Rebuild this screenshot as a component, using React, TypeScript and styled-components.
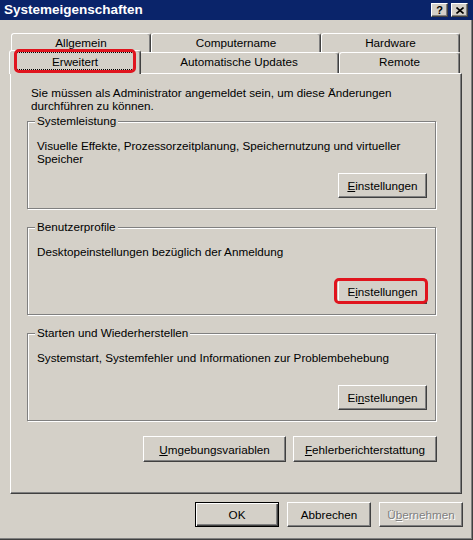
import styled, { createGlobalStyle, css } from "styled-components";

const GlobalStyle = createGlobalStyle`
  html, body {
    margin: 0;
    padding: 0;
    background: #d4d0c8;
  }
  body {
    font-family: "Liberation Sans", Arial, sans-serif;
    font-size: 11.7px;
    color: #000;
  }
`;

const raised = css`
  border: 1px solid;
  border-color: #fff #404040 #404040 #fff;
  box-shadow: inset -1px -1px #808080;
`;

const Window = styled.div`
  width: 473px;
  height: 540px;
  display: flex;
  flex-direction: column;
  background: #d4d0c8;
  overflow: hidden;
`;

const TitleBar = styled.div`
  flex: none;
  height: 20px;
  background: #0a246a;
  display: flex;
  align-items: center;
  padding: 0 5px 0 4px;
`;

const Title = styled.div`
  flex: 1;
  color: #fff;
  font-weight: bold;
  font-size: 13.5px;
  line-height: 20px;
`;

const CaptionButton = styled.div<{ $gap?: number }>`
  ${raised};
  box-sizing: border-box;
  width: 17px;
  height: 14px;
  margin-left: ${(p) => p.$gap ?? 0}px;
  background: #d4d0c8;
  display: flex;
  align-items: center;
  justify-content: center;
  font-weight: bold;
  font-size: 11px;
  line-height: 1;
`;

const Body = styled.div`
  flex: 1;
  box-sizing: border-box;
  padding: 13px 10px 0 10px;
  border-right: 1px solid #404040;
  border-bottom: 1px solid #404040;
  box-shadow: inset -1px -1px #808080;
  display: flex;
  flex-direction: column;
`;

const TabStrip = styled.div`
  display: flex;
  flex-direction: column;
  padding-left: 1px;
`;

const TabRow = styled.div<{ $h: number }>`
  display: flex;
  height: ${(p) => p.$h}px;
`;

const Tab = styled.div<{ $w: number; $active?: boolean }>`
  box-sizing: border-box;
  flex: none;
  width: ${(p) => p.$w}px;
  border: 1px solid;
  border-bottom: none;
  border-color: #fff #404040 transparent #fff;
  border-radius: 3px 3px 0 0;
  box-shadow: inset -1px 0 #808080;
  background: #d4d0c8;
  text-align: center;
  line-height: 18px;
  white-space: nowrap;

  ${(p) =>
    p.$active &&
    css`
      position: relative;
      z-index: 1;
      width: ${p.$w + 4}px;
      margin: -2px -2px -1px -2px;

      &::after {
        content: "";
        position: absolute;
        left: 4px;
        right: 4px;
        top: -2px;
        bottom: 1px;
        border: 3px solid #e0141e;
        border-radius: 5px;
        pointer-events: none;
      }
    `}
`;

const FocusRing = styled.span`
  display: block;
  margin: 1px 6px 0;
  padding-top: 1px;
  border: 1px dotted #000;
  line-height: 15px;
`;

const Panel = styled.div`
  ${raised};
  flex: none;
  box-sizing: border-box;
  height: 421px;
  padding: 12px 25px 0 16px;
  display: flex;
  flex-direction: column;
`;

const Intro = styled.div`
  margin: 0 0 2px 4px;
  line-height: 13px;
`;

const GroupBox = styled.fieldset`
  margin: 0;
  padding: 11px 8px 10px 9px;
  min-inline-size: 0;
  border: 1px solid #808080;
  box-shadow: inset 1px 1px #fff, 1px 1px #fff;

  & + & {
    margin-top: 11px;
  }
`;

const GroupLabel = styled.legend`
  padding: 0 2px;
  margin-left: -2px;
  line-height: 14px;
  background: #d4d0c8;
`;

const GroupBody = styled.div`
  height: 59px;
  display: flex;
  flex-direction: column;
`;

const GroupText = styled.div`
  line-height: 13px;
`;

const Button = styled.button<{
  $w: number;
  $h?: number;
  $default?: boolean;
  $marked?: boolean;
}>`
  ${raised};
  position: relative;
  box-sizing: border-box;
  width: ${(p) => p.$w}px;
  height: ${(p) => p.$h ?? 25}px;
  margin: 0;
  padding: 0;
  font: inherit;
  color: #000;
  background: #d4d0c8;
  box-shadow: inset -1px -1px #808080, inset 1px 1px #d4d0c8;
  white-space: nowrap;

  ${(p) =>
    p.$default &&
    css`
      border: 1px solid #000;
      box-shadow: inset 1px 1px #fff, inset -1px -1px #404040,
        inset -2px -2px #808080;
    `}

  &:disabled {
    color: #808080;
    text-shadow: 1px 1px #fff;
  }

  ${(p) =>
    p.$marked &&
    css`
      &::after {
        content: "";
        position: absolute;
        left: -5px;
        right: -2px;
        top: -2px;
        bottom: -1px;
        border: 3px solid #e0141e;
        border-radius: 5px;
        pointer-events: none;
      }
    `}
`;

const GroupButton = styled(Button)`
  align-self: flex-end;
  margin-top: auto;
`;

const ActionRow = styled.div`
  display: flex;
  justify-content: flex-end;
  gap: 7px;
  margin: 15px -1px 0 0;
`;

const Footer = styled.div`
  display: flex;
  justify-content: flex-end;
  gap: 8px;
  margin: 8px -1px 0 0;
`;

const CloseGlyph = () => (
  <svg width="8" height="7" viewBox="0 0 8 7">
    <path d="M0.5 0.5 L7.5 6.5 M7.5 0.5 L0.5 6.5" stroke="#000" strokeWidth="1.6" />
  </svg>
);

const groups = [
  {
    title: "Systemleistung",
    text: "Visuelle Effekte, Prozessorzeitplanung, Speichernutzung und virtueller Speicher",
    key: 0,
  },
  {
    title: "Benutzerprofile",
    text: "Desktopeinstellungen bezüglich der Anmeldung",
    key: 1,
    marked: true,
  },
  {
    title: "Starten und Wiederherstellen",
    text: "Systemstart, Systemfehler und Informationen zur Problembehebung",
    key: 2,
  },
];

const Mnemonic = ({ label, at }: { label: string; at: number }) => (
  <>
    {label.slice(0, at)}
    <u>{label[at]}</u>
    {label.slice(at + 1)}
  </>
);

export default function App() {
  return (
    <>
      <GlobalStyle />
      <Window>
        <TitleBar>
          <Title>Systemeigenschaften</Title>
          <CaptionButton>?</CaptionButton>
          <CaptionButton $gap={3}>
            <CloseGlyph />
          </CaptionButton>
        </TitleBar>
        <Body>
          <TabStrip>
            <TabRow $h={19}>
              <Tab $w={140}>Allgemein</Tab>
              <Tab $w={170}>Computername</Tab>
              <Tab $w={139}>Hardware</Tab>
            </TabRow>
            <TabRow $h={21}>
              <Tab $w={128} $active>
                <FocusRing>Erweitert</FocusRing>
              </Tab>
              <Tab $w={200}>Automatische Updates</Tab>
              <Tab $w={121}>Remote</Tab>
            </TabRow>
          </TabStrip>

          <Panel>
            <Intro>
              Sie müssen als Administrator angemeldet sein, um diese Änderungen
              <br />
              durchführen zu können.
            </Intro>

            {groups.map((g) => (
              <GroupBox key={g.key}>
                <GroupLabel>{g.title}</GroupLabel>
                <GroupBody>
                  <GroupText>{g.text}</GroupText>
                  <GroupButton $w={89} $marked={g.marked}>
                    <Mnemonic label="Einstellungen" at={g.key} />
                  </GroupButton>
                </GroupBody>
              </GroupBox>
            ))}

            <ActionRow>
              <Button $w={143} $h={26}>
                <Mnemonic label="Umgebungsvariablen" at={0} />
              </Button>
              <Button $w={144} $h={26}>
                <Mnemonic label="Fehlerberichterstattung" at={0} />
              </Button>
            </ActionRow>
          </Panel>

          <Footer>
            <Button $w={84} $default>
              OK
            </Button>
            <Button $w={84}>Abbrechen</Button>
            <Button $w={84} disabled>
              <Mnemonic label="Übernehmen" at={1} />
            </Button>
          </Footer>
        </Body>
      </Window>
    </>
  );
}
